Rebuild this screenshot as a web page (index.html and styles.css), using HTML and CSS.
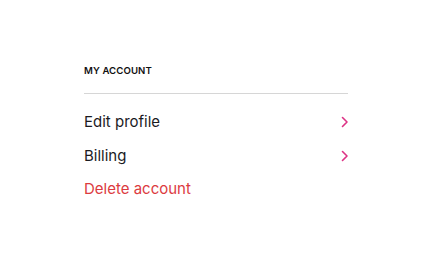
FILE: index.html
```html
<!DOCTYPE html>
<html lang="en">
<head>
<meta charset="utf-8">
<link rel="stylesheet" href="styles.css">
</head>
<body>
<section class="account">
  <h2 class="account-title">My account</h2>
  <ul class="menu">
    <li class="menu-item">
      <span>Edit profile</span>
      <svg class="chev" width="8" height="12" viewBox="0 0 8 12"><path d="M1.5 1.5 L6 6 L1.5 10.5" fill="none" stroke="currentColor" stroke-width="1.6" stroke-linecap="round" stroke-linejoin="round"/></svg>
    </li>
    <li class="menu-item">
      <span>Billing</span>
      <svg class="chev" width="8" height="12" viewBox="0 0 8 12"><path d="M1.5 1.5 L6 6 L1.5 10.5" fill="none" stroke="currentColor" stroke-width="1.6" stroke-linecap="round" stroke-linejoin="round"/></svg>
    </li>
    <li class="menu-item danger">
      <span>Delete account</span>
    </li>
  </ul>
</section>
</body>
</html>
```
FILE: styles.css
```css
html, body {
  margin: 0;
  padding: 0;
  background: #ffffff;
}
body {
  font-family: Inter, "Noto Sans", sans-serif;
  color: #1b1b1f;
}
.account {
  width: 264px;
  margin: 0 auto;
  padding-top: 63px;
}
.account-title {
  margin: 0;
  font-size: 9.6px;
  line-height: 16px;
  font-weight: 600;
  text-transform: uppercase;
  letter-spacing: 0.1px;
  color: #111;
  padding-bottom: 14px;
  border-bottom: 1.5px solid #d6d6d6;
}
.menu {
  list-style: none;
  margin: 0;
  padding: 11.5px 0 0;
}
.menu-item {
  display: flex;
  align-items: center;
  justify-content: space-between;
  height: 33.5px;
  font-size: 15px;
  line-height: 20px;
}
.chev {
  color: #dd3385;
  margin-right: -1px;
}
.danger {
  color: #dc3b3f;
}
```
